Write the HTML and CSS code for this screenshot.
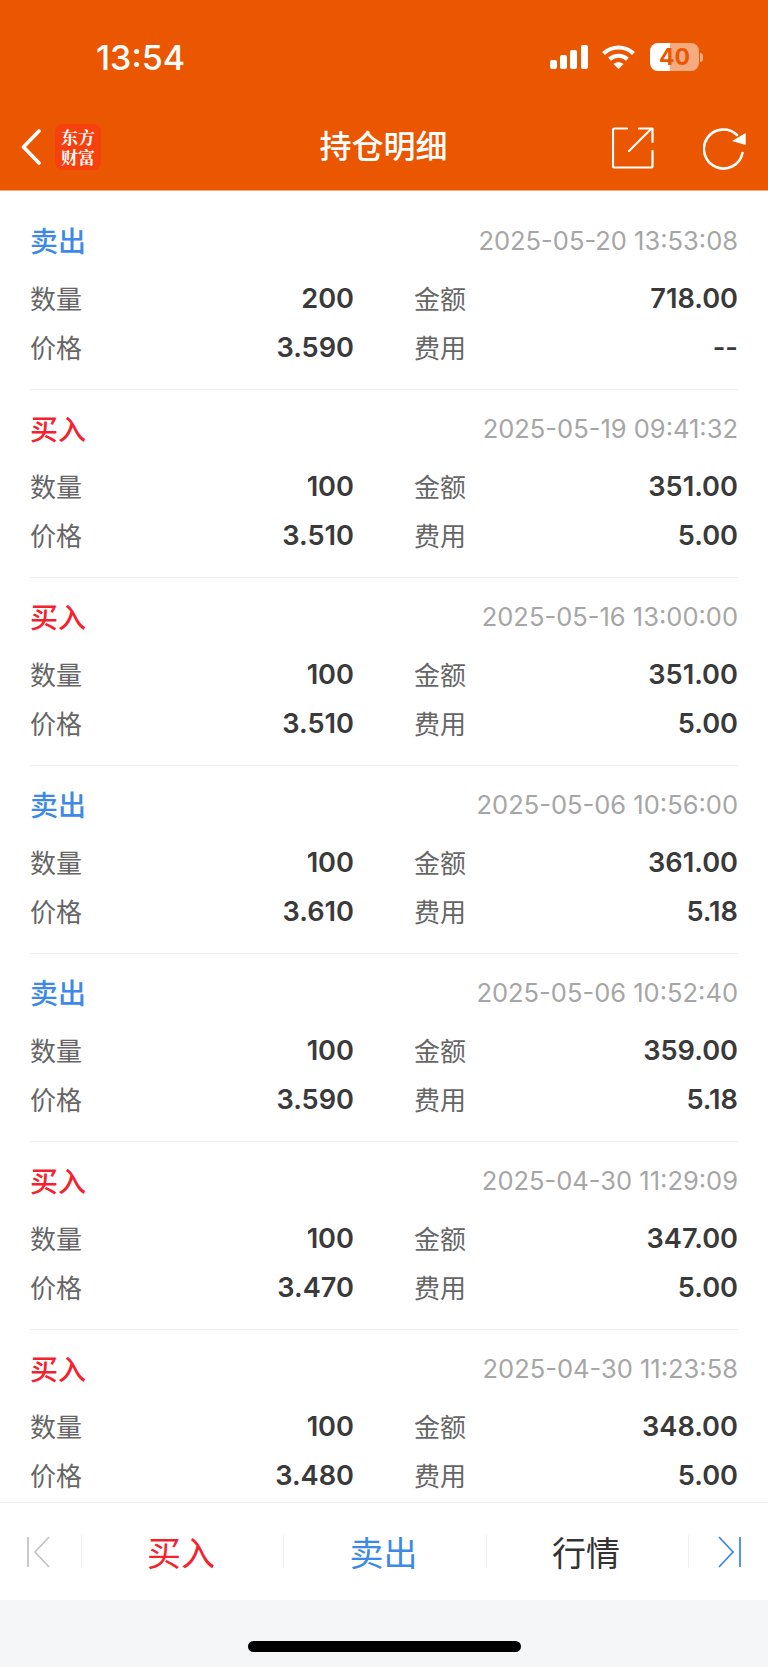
FILE: index.html
```html
<!DOCTYPE html>
<html lang="zh-CN">
<head>
  <meta charset="UTF-8" />
  <title>持仓明细</title>
  <link rel="stylesheet" href="styles.css">
</head>
<body>
<div class="page">

  <!-- orange header -->
  <header class="header">
    <div class="status">
      <span class="time">13:54</span>
      <div class="status-icons">
        <svg class="signal" width="38" height="24" viewBox="0 0 38 24" fill="#fff">
          <rect x="0" y="15" width="7" height="9" rx="2"/>
          <rect x="10" y="10" width="7" height="14" rx="2"/>
          <rect x="20" y="5" width="7" height="19" rx="2"/>
          <rect x="31" y="0" width="7" height="24" rx="2"/>
        </svg>
        <svg class="wifi" width="33" height="24" viewBox="0 0 33 24" fill="none" stroke="#fff" stroke-width="4.2">
          <path d="M1.5 8.5C10 0.5 23 0.5 31.5 8.5"/>
          <path d="M7.5 14.2C12.8 9.6 20.2 9.6 25.5 14.2"/>
          <path d="M16.5 24L11.5 19C14.5 16.6 18.5 16.6 21.5 19Z" fill="#fff" stroke="none"/>
        </svg>
        <div class="battery"><span>40</span></div>
        <div class="battery-nub"></div>
      </div>
    </div>
    <nav class="nav">
      <div class="nav-left">
        <svg class="back" width="20" height="36" viewBox="0 0 20 36" fill="none" stroke="#fff" stroke-width="3.6" stroke-linecap="round" stroke-linejoin="round">
          <path d="M18 2L2.500 18L18 34"/>
        </svg>
        <div class="logo">东方<br>财富</div>
      </div>
      <h1 class="title">持仓明细</h1>
      <div class="nav-right">
        <svg width="42" height="42" viewBox="0 0 42 42" fill="none" stroke="#fff" stroke-width="2.2" stroke-linecap="round" stroke-linejoin="round">
          <path d="M15 1.500H2.500a1.500 1.500 0 0 0-1.500 1.500V39a1.500 1.500 0 0 0 1.500 1.500H39a1.500 1.500 0 0 0 1.500-1.500V24"/>
          <path d="M17 24L39 2"/>
          <path d="M27 1.500H40.500V15"/>
        </svg>
        <svg width="43" height="43" viewBox="0 0 43 43" fill="none" stroke="#fff" stroke-width="2.600" stroke-linecap="round">
          <path d="M34 8A19.500 19.500 0 1 0 39.500 26"/>
          <path d="M42.700 6V18L29 14Z" fill="#fff" stroke="none"/>
        </svg>
      </div>
    </nav>
  </header>

  <!-- trade records -->
  <main class="list">
    <section class="item">
      <div class="item-head"><span class="type sell">卖出</span><span class="date">2025-05-20 13:53:08</span></div>
      <div class="row"><div class="pair"><span>数量</span><b>200</b></div><div class="pair"><span>金额</span><b>718.00</b></div></div>
      <div class="row"><div class="pair"><span>价格</span><b>3.590</b></div><div class="pair"><span>费用</span><b>--</b></div></div>
    </section>
    <section class="item">
      <div class="item-head"><span class="type buy">买入</span><span class="date">2025-05-19 09:41:32</span></div>
      <div class="row"><div class="pair"><span>数量</span><b>100</b></div><div class="pair"><span>金额</span><b>351.00</b></div></div>
      <div class="row"><div class="pair"><span>价格</span><b>3.510</b></div><div class="pair"><span>费用</span><b>5.00</b></div></div>
    </section>
    <section class="item">
      <div class="item-head"><span class="type buy">买入</span><span class="date">2025-05-16 13:00:00</span></div>
      <div class="row"><div class="pair"><span>数量</span><b>100</b></div><div class="pair"><span>金额</span><b>351.00</b></div></div>
      <div class="row"><div class="pair"><span>价格</span><b>3.510</b></div><div class="pair"><span>费用</span><b>5.00</b></div></div>
    </section>
    <section class="item">
      <div class="item-head"><span class="type sell">卖出</span><span class="date">2025-05-06 10:56:00</span></div>
      <div class="row"><div class="pair"><span>数量</span><b>100</b></div><div class="pair"><span>金额</span><b>361.00</b></div></div>
      <div class="row"><div class="pair"><span>价格</span><b>3.610</b></div><div class="pair"><span>费用</span><b>5.18</b></div></div>
    </section>
    <section class="item">
      <div class="item-head"><span class="type sell">卖出</span><span class="date">2025-05-06 10:52:40</span></div>
      <div class="row"><div class="pair"><span>数量</span><b>100</b></div><div class="pair"><span>金额</span><b>359.00</b></div></div>
      <div class="row"><div class="pair"><span>价格</span><b>3.590</b></div><div class="pair"><span>费用</span><b>5.18</b></div></div>
    </section>
    <section class="item">
      <div class="item-head"><span class="type buy">买入</span><span class="date">2025-04-30 11:29:09</span></div>
      <div class="row"><div class="pair"><span>数量</span><b>100</b></div><div class="pair"><span>金额</span><b>347.00</b></div></div>
      <div class="row"><div class="pair"><span>价格</span><b>3.470</b></div><div class="pair"><span>费用</span><b>5.00</b></div></div>
    </section>
    <section class="item">
      <div class="item-head"><span class="type buy">买入</span><span class="date">2025-04-30 11:23:58</span></div>
      <div class="row"><div class="pair"><span>数量</span><b>100</b></div><div class="pair"><span>金额</span><b>348.00</b></div></div>
      <div class="row"><div class="pair"><span>价格</span><b>3.480</b></div><div class="pair"><span>费用</span><b>5.00</b></div></div>
    </section>
  </main>

  <!-- bottom actions -->
  <div class="toolbar">
    <div class="tool tool-first">
      <svg width="24" height="32" viewBox="0 0 24 32" fill="none" stroke="#c4c4c4" stroke-width="1.800">
        <path d="M2 1V31"/>
        <path d="M23 1L9 16L23 31"/>
      </svg>
    </div>
    <div class="tool text buy">买入</div>
    <div class="tool text sell">卖出</div>
    <div class="tool text dark">行情</div>
    <div class="tool tool-last">
      <svg width="24" height="32" viewBox="0 0 24 32" fill="none" stroke="#3d8ae6" stroke-width="1.800">
        <path d="M1 1L15 16L1 31"/>
        <path d="M22 1V31"/>
      </svg>
    </div>
  </div>

  <div class="safe-area"><div class="home-bar"></div></div>
</div>
</body>
</html>
```

FILE: styles.css
```css
* {
  box-sizing: border-box;
}
body {
  margin: 0;
  font-family: Inter, "Noto Sans CJK SC", sans-serif;
  background-color: #fff;
}
.page {
  width: 768px;
  height: 1667px;
  display: flex;
  flex-direction: column;
  overflow: hidden;
}

/* header */
.header {
  height: 191px;
  flex: none;
  background-color: #eb5600;
  border-bottom: 1px solid #f6ab80;
  color: #fff;
}
.status {
  height: 114px;
  padding: 40px 65px 0 96px;
  display: flex;
  justify-content: space-between;
  align-items: flex-start;
}
.time {
  font-size: 34px;
  font-weight: 500;
  line-height: 36px;
}
.status-icons {
  display: flex;
  align-items: center;
  padding-top: 3px;
}
.wifi {
  margin-left: 14px;
}
.battery {
  width: 49px;
  height: 28px;
  margin-left: 15px;
  border-radius: 8px;
  background: linear-gradient(90deg, #fff 40%, rgba(255, 255, 255, 0.5) 40%);
  color: #eb5600;
  font-size: 23px;
  font-weight: 700;
  line-height: 28px;
  text-align: center;
}
.battery-nub {
  width: 3px;
  height: 9px;
  margin-left: 1px;
  border-radius: 0 3px 3px 0;
  background-color: rgba(255, 255, 255, 0.5);
}
.nav {
  height: 76px;
  padding: 0 22px 0 21px;
  display: flex;
  align-items: flex-start;
}
.nav-left {
  flex: 1;
  display: flex;
  align-items: center;
  gap: 14px;
  padding-top: 10px;
}
.logo {
  width: 46px;
  height: 46px;
  border-radius: 8px;
  background-color: #f6400d;
  font-family: "Noto Serif CJK SC", "Noto Sans CJK SC", serif;
  font-size: 17px;
  font-weight: 700;
  line-height: 20px;
  text-align: center;
  padding-top: 3px;
}
.title {
  margin: 0;
  padding-top: 10px;
  font-size: 32px;
  font-weight: 500;
  line-height: 46px;
}
.nav-right {
  flex: 1;
  display: flex;
  justify-content: flex-end;
  gap: 49px;
  padding-top: 13px;
}

/* list */
.list {
  flex: 1;
  min-height: 0;
  overflow: hidden;
  padding: 11px 30px 0;
}
.item {
  height: 188px;
  padding-top: 20px;
  border-bottom: 1px solid #f0f0f0;
}
.item-head {
  height: 36px;
  display: flex;
  justify-content: space-between;
  align-items: center;
}
.type {
  font-size: 28px;
  font-weight: 500;
}
.buy {
  color: #f5222d;
}
.sell {
  color: #3d8ae6;
}
.date {
  font-size: 25.5px;
  color: #a6a6a6;
}
.row {
  height: 49px;
  display: grid;
  grid-template-columns: 324px 324px;
  gap: 60px;
  align-items: center;
}
.item-head + .row {
  margin-top: 15px;
}
.pair {
  display: flex;
  justify-content: space-between;
  align-items: center;
}
.pair span {
  font-size: 26px;
  color: #666;
}
.pair b {
  padding-top: 2px;
  font-size: 27.2px;
  font-weight: 600;
  color: #3a3a3a;
}

/* toolbar */
.toolbar {
  height: 98px;
  flex: none;
  border-top: 1px solid #f0f0f0;
  background-color: #fff;
  display: grid;
  grid-template-columns: 81px 202px 203px 202px 80px;
  align-items: center;
}
.tool {
  height: 33px;
  display: flex;
  align-items: center;
  justify-content: center;
  border-left: 1px solid #eee;
  font-size: 34px;
}
.tool.text {
  padding-right: 3px;
}
.tool-first {
  border-left: none;
  padding-right: 6px;
}
.tool-last {
  padding-left: 2px;
}
.dark {
  color: #333;
}
.safe-area {
  height: 67px;
  flex: none;
  background-color: #f5f6f8;
  padding-top: 41px;
}
.home-bar {
  width: 273px;
  height: 11px;
  margin-left: 248px;
  border-radius: 6px;
  background-color: #000;
}
```
